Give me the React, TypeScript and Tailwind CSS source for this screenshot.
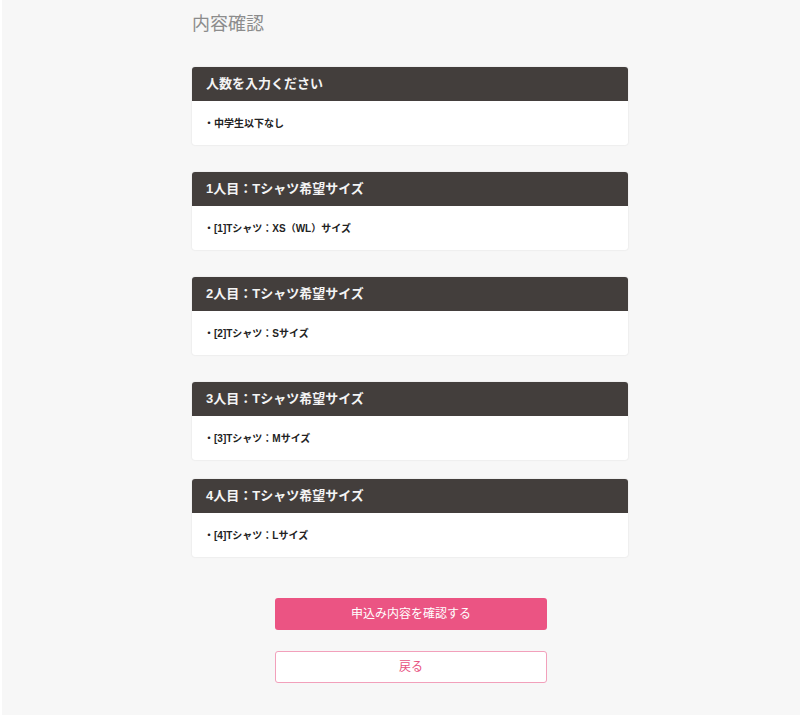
const sections = [
  { title: '人数を入力ください', item: '・中学生以下なし' },
  { title: '1人目：Tシャツ希望サイズ', item: '・[1]Tシャツ：XS（WL）サイズ' },
  { title: '2人目：Tシャツ希望サイズ', item: '・[2]Tシャツ：Sサイズ' },
  { title: '3人目：Tシャツ希望サイズ', item: '・[3]Tシャツ：Mサイズ' },
  { title: '4人目：Tシャツ希望サイズ', item: '・[4]Tシャツ：Lサイズ' },
];

export default function App() {
  return (
    <div
      className="flex min-h-[715px] bg-white [text-spacing-trim:space-all]"
      style={{ fontFamily: '"Liberation Sans", "Noto Sans CJK JP", sans-serif' }}
    >
      <div className="ml-[2px] flex-1 bg-[#f7f7f7]">
        <div className="ml-[190px] w-[436px] pt-[13px] pb-8">
          <h1 className="text-[18px] leading-[22px] text-[#8c8c8c]">内容確認</h1>

          <div className="mt-[32px]">
            {sections.map((s, i) => (
              <section
                key={s.title}
                className={`overflow-hidden rounded-[3px] bg-white shadow-[0_0_2px_rgba(0,0,0,0.12)] ${
                  i === 0 ? '' : i === 4 ? 'mt-[19px]' : 'mt-[27px]'
                }`}
              >
                <div className="flex h-[34px] items-center bg-[#433e3c] px-[14px] text-[13px] font-bold text-[#f4f4f4]">
                  {s.title}
                </div>
                <div className="flex h-[44px] items-center px-[12px] text-[10px] font-bold text-[#222]">
                  {s.item}
                </div>
              </section>
            ))}
          </div>

          <div className="mt-[41px] flex flex-col items-center gap-[21px] pl-[2px]">
            <button className="h-[32px] w-[272px] rounded-[3px] bg-[#eb5483] text-[12px] text-white">
              申込み内容を確認する
            </button>
            <button className="h-[32px] w-[272px] rounded-[3px] border border-[#f2a0bb] bg-white text-[12px] text-[#e8527f]">
              戻る
            </button>
          </div>
        </div>
      </div>
    </div>
  );
}
